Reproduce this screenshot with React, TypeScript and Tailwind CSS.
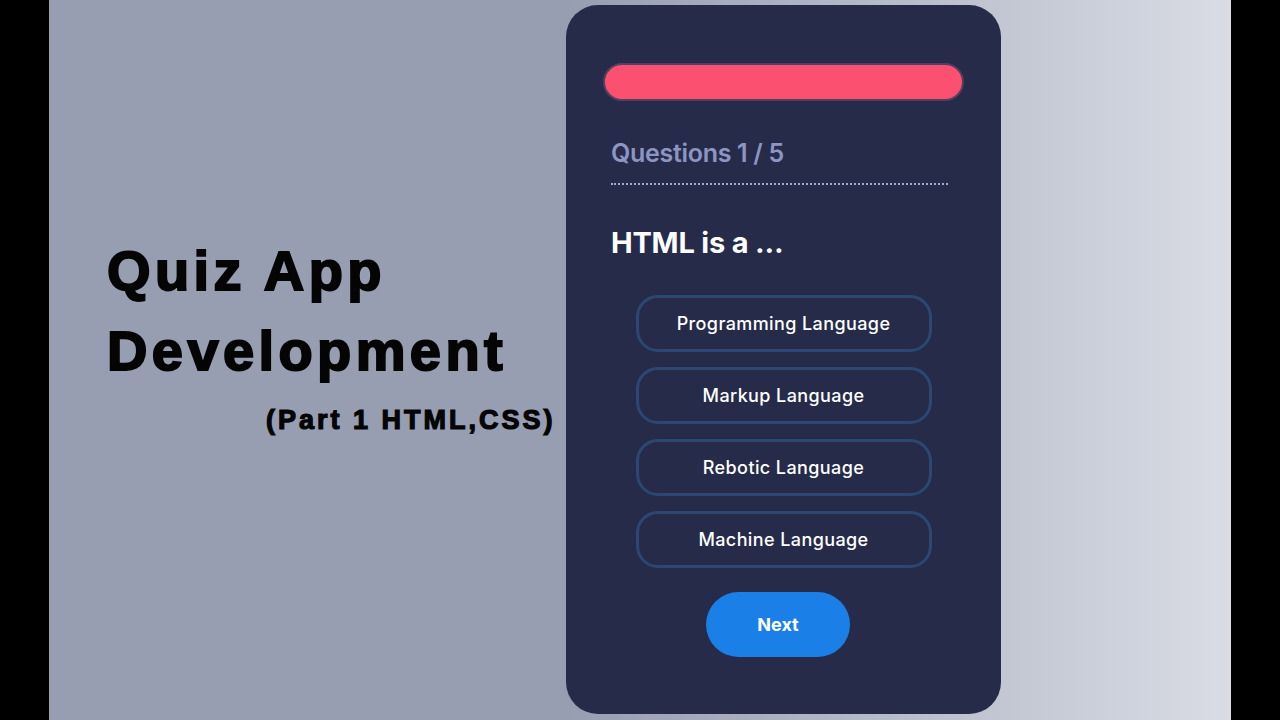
import React from 'react';

const options = ['Programming Language', 'Markup Language', 'Rebotic Language', 'Machine Language'];

export default function App() {
  return (
    <div className="w-[1280px] h-[720px] bg-black px-[49px] overflow-hidden">
      <div className="h-full flex bg-[linear-gradient(to_right,#979eb1_0%,#979eb1_44%,#d9dce4_100%)]">
        {/* Title */}
        <div className="w-[517px] shrink-0 pl-[58px] pt-[231px] font-['Liberation_Sans',Arial,sans-serif] font-bold text-[#050505] [-webkit-text-stroke:2px_#050505]">
          <div className="text-[56px] leading-[80px] tracking-[4.4px] whitespace-nowrap">Quiz App</div>
          <div className="text-[56px] leading-[80px] tracking-[4.4px] whitespace-nowrap">Development</div>
          <div className="mt-[14px] pl-[159px] text-[27px] leading-[30px] tracking-[3px] whitespace-nowrap [-webkit-text-stroke:1.2px_#050505]">
            (Part 1 HTML,CSS)
          </div>
        </div>

        {/* Quiz card */}
        <div className="mt-[5px] w-[435px] h-[709px] rounded-[32px] bg-[#262b4a] pt-[58px] font-['Inter','Open_Sans',sans-serif]">
          <div className="mx-[37px] h-[38px] rounded-full bg-[#fc5070] border-2 border-[#533f60]"></div>

          <div className="mx-[45px] mt-[36px]">
            <h3 className="text-[25px] leading-[32px] font-semibold text-[#8e95c3] tracking-[-0.3px]">Questions 1 / 5</h3>
            <div className="mt-[14px] w-[337px] border-b-2 border-dotted border-[#a3a9d4]"></div>
            <h2 className="mt-[40px] text-[29px] leading-[36px] font-bold text-white tracking-[-0.2px]">HTML is a ...</h2>
          </div>

          <div className="mt-[34px] flex flex-col items-center gap-[15px]">
            {options.map((o) => (
              <button
                key={o}
                className="w-[296px] h-[57px] rounded-[22px] border-[3px] border-[#2c4872] text-white text-[18px] tracking-[0.4px] font-medium flex items-center justify-center"
              >
                {o}
              </button>
            ))}
          </div>

          <div className="mt-[24px] flex justify-center pr-[11px]">
            <button className="w-[144px] h-[65px] rounded-full bg-[#1a80e8] text-white text-[18px] font-bold">Next</button>
          </div>
        </div>
      </div>
    </div>
  );
}
